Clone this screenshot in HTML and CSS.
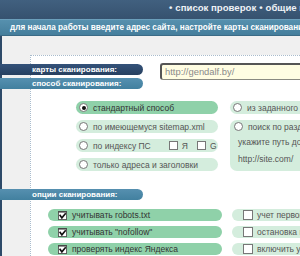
FILE: index.html
```html
<!DOCTYPE html>
<html lang="ru">
<head>
<meta charset="utf-8">
<link rel="stylesheet" href="styles.css">
</head>
<body>
<header class="top">
  <nav class="nav"><span class="dot">•</span>список проверок<span class="dot">•</span>общие настройки</nav>
</header>
<div class="hint">для начала работы введите адрес сайта, настройте карты сканирования и нажмите кнопку «старт»</div>
<div class="page">
  <main class="content">
    <div class="head-row">
      <div class="bars">
        <div class="bar bar-dark">карты сканирования:</div>
        <div class="bar">способ сканирования:</div>
      </div>
      <div class="url">http://gendalf.by/</div>
    </div>

    <div class="radios">
      <div class="pill strong"><span class="radio on"></span>стандартный способ</div>
      <div class="pill"><span class="radio"></span>из заданного файла</div>
      <div class="pill"><span class="radio"></span>по имеющемуся sitemap.xml</div>
      <div class="box">
        <div class="box-line"><span class="radio"></span>поиск по разделу сайта</div>
        <div class="box-line indent">укажите путь до раздела:</div>
        <div class="box-line indent">http://site.com/<span class="path"></span></div>
      </div>
      <div class="pill"><span class="radio"></span>по индексу ПС<span class="cb cb-ya"></span>Я<span class="cb cb-g"></span>G</div>
      <div class="pill"><span class="radio"></span>только адреса и заголовки</div>
    </div>

    <div class="bar bar-opts">опции сканирования:</div>

    <div class="checks">
      <div class="pill strong wide"><svg class="ck" viewBox="0 0 10 10"><rect x="0.5" y="0.5" width="9" height="9" fill="#fff" stroke="#555"/><rect x="0.5" y="0.5" width="9" height="1.2" fill="#333"/><path d="M1.8 4.2 L4.3 7.6 L8.6 2.6" fill="none" stroke="#111" stroke-width="1.8"/></svg>учитывать robots.txt</div>
      <div class="pill"><span class="cb"></span>учет первой страницы</div>
      <div class="pill strong wide"><svg class="ck" viewBox="0 0 10 10"><rect x="0.5" y="0.5" width="9" height="9" fill="#fff" stroke="#555"/><rect x="0.5" y="0.5" width="9" height="1.2" fill="#333"/><path d="M1.8 4.2 L4.3 7.6 L8.6 2.6" fill="none" stroke="#111" stroke-width="1.8"/></svg>учитывать "nofollow"</div>
      <div class="pill"><span class="cb"></span>остановка проверки</div>
      <div class="pill strong wide"><svg class="ck" viewBox="0 0 10 10"><rect x="0.5" y="0.5" width="9" height="9" fill="#fff" stroke="#555"/><rect x="0.5" y="0.5" width="9" height="1.2" fill="#333"/><path d="M1.8 4.2 L4.3 7.6 L8.6 2.6" fill="none" stroke="#111" stroke-width="1.8"/></svg>проверять индекс Яндекса</div>
      <div class="pill"><span class="cb"></span>включить угадывание</div>
    </div>
  </main>
</div>
</body>
</html>
```

FILE: styles.css
```css
html, body {
  margin: 0;
  padding: 0;
  overflow: hidden;
  width: 300px;
  height: 256px;
  background: #f0f0f0;
}
body {
  font-family: "Liberation Sans", Arial, sans-serif;
  width: 420px;
}
.top {
  height: 19px;
  background: linear-gradient(#41607f, #36526f);
  white-space: nowrap;
  overflow: hidden;
}
.nav {
  padding-left: 169px;
  color: #eef2f6;
  font-weight: bold;
  font-size: 9.6px;
  line-height: 16px;
}
.dot {
  margin-right: 3px;
  margin-left: 3px;
}
.nav .dot:first-child { margin-left: 0; }
.hint {
  height: 15px;
  border-top: 1px solid #6b9fbb;
  border-bottom: 1px solid #3b6b86;
  background: linear-gradient(#5690ae, #457e9c);
  color: #fff;
  font-weight: bold;
  font-size: 8.2px;
  line-height: 15px;
  padding-left: 10px;
  white-space: nowrap;
  overflow: hidden;
}
.page {
  border-left: 2px solid #2e4a69;
  padding: 19px 0 0 28px;
  height: 220px;
}
.content {
  background: #fff;
  border-top: 1px dotted #a9bccd;
  border-left: 1px dotted #a9bccd;
  height: 210px;
  padding-top: 0;
}
.head-row {
  display: flex;
  align-items: flex-start;
}
.bars {
  display: flex;
  flex-direction: column;
  gap: 3px;
  margin-left: -31px;
  margin-top: 8px;
}
.bar {
  width: 111px;
  height: 11px;
  padding-left: 32px;
  border-radius: 0 6px 6px 0;
  background: linear-gradient(#5690b0, #42809f);
  color: #fff;
  font-weight: bold;
  font-size: 8px;
  line-height: 11px;
  white-space: nowrap;
}
.bar-dark {
  background: linear-gradient(#34527a, #27405f);
}
.url {
  margin-left: 17px;
  margin-top: 7px;
  width: 160px;
  height: 14px;
  border: 1px solid #8a8a80;
  border-top: 2px solid #555;
  border-left: 2px solid #555;
  border-radius: 3px;
  background: #fffde2;
  color: #8a8a8a;
  font-size: 9.4px;
  line-height: 14px;
  padding-left: 3px;
}
.radios {
  display: grid;
  grid-template-columns: 142px 100px;
  grid-auto-rows: 13px;
  column-gap: 12px;
  row-gap: 6px;
  margin-left: 45px;
  margin-top: 12px;
}
.pill {
  display: flex;
  align-items: center;
  padding-left: 3px;
  border-radius: 7px;
  background: #d4eddd;
  color: #555;
  font-size: 8.5px;
  white-space: nowrap;
  overflow: hidden;
}
.pill.strong {
  background: #8fd1a9;
  color: #333;
}
.radio {
  flex: none;
  width: 7px;
  height: 7px;
  border: 1px solid #777;
  border-radius: 50%;
  background: #fff;
  margin-right: 5px;
  position: relative;
}
.radio.on::after {
  content: "";
  position: absolute;
  left: 1.5px;
  top: 1.5px;
  width: 4px;
  height: 4px;
  border-radius: 50%;
  background: #111;
}
.box {
  grid-row: span 3;
  border-radius: 7px;
  background: #d4eddd;
  color: #555;
  font-size: 8.5px;
  white-space: nowrap;
  overflow: hidden;
  padding-left: 4px;
  display: flex;
  flex-direction: column;
}
.box-line {
  height: 13px;
  display: flex;
  align-items: center;
}
.box-line.indent {
  padding-left: 4px;
  height: 17px;
}
.path {
  margin-left: 9px;
  width: 20px;
  height: 10px;
  background: #fff;
  border-left: 2px solid #555;
}
.cb {
  flex: none;
  width: 7px;
  height: 7px;
  border: 1px solid #777;
  background: #fff;
  margin-right: 4px;
}
.cb-ya { margin-left: 18px; }
.cb-g { margin-left: 9px; }
.bar-opts {
  margin-left: -31px;
  margin-top: 18px;
}
.checks {
  display: grid;
  grid-template-columns: 174px 100px;
  grid-auto-rows: 12px;
  column-gap: 10px;
  row-gap: 5px;
  margin-left: 17px;
  margin-top: 9px;
}
.checks .pill {
  padding-left: 11px;
}
.checks .pill.wide {
  padding-left: 10px;
}
.ck {
  flex: none;
  width: 9px;
  height: 9px;
  margin-right: 5px;
}
.checks .cb {
  width: 8px;
  height: 8px;
  margin-right: 4px;
}
```
